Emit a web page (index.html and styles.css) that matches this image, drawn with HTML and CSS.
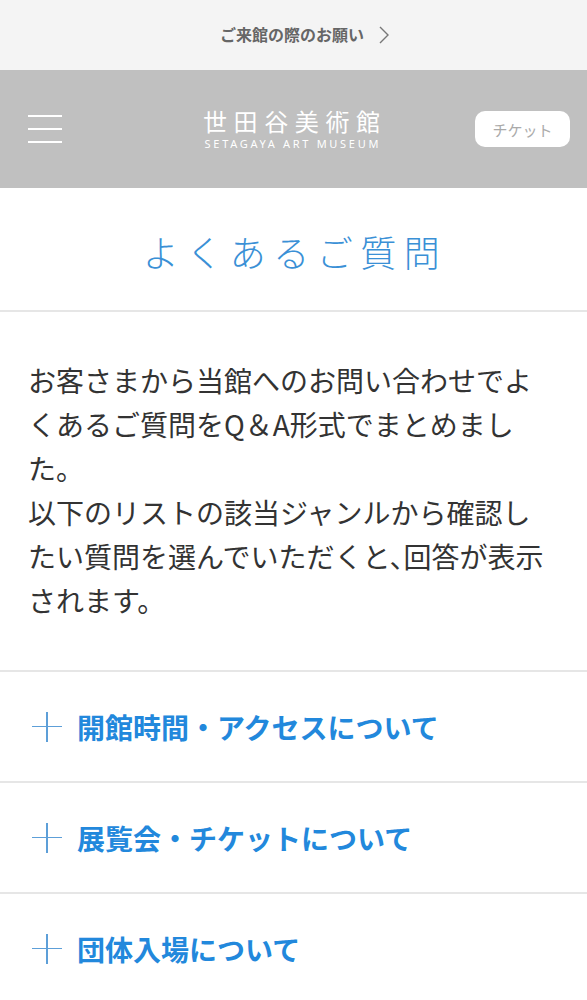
FILE: index.html
```html
<!DOCTYPE html>
<html lang="ja">
<head>
  <meta charset="UTF-8">
  <title>よくあるご質問 | 世田谷美術館</title>
  <link rel="stylesheet" href="styles.css">
</head>
<body>
  <div class="notice">
    <a href="#" class="notice-link">
      ご来館の際のお願い
      <svg class="chevron" width="10" height="18" viewBox="0 0 10 18"><path d="M1 1 L9 9 L1 17" fill="none" stroke="#777" stroke-width="1.4"/></svg>
    </a>
  </div>

  <header class="site-header">
    <button class="menu-btn" aria-label="メニュー">
      <span></span><span></span><span></span>
    </button>
    <a href="#" class="logo">
      <span class="logo-ja">世田谷美術館</span>
      <span class="logo-en">SETAGAYA ART MUSEUM</span>
    </a>
    <a href="#" class="ticket-btn">チケット</a>
  </header>

  <main>
    <h1 class="page-title">よくあるご質問</h1>

    <div class="intro">
      <p>お客さまから当館へのお問い合わせでよくあるご質問をQ＆A形式でまとめました。<br>以下のリストの該当ジャンルから確認したい質問を選んでいただくと、回答が表示されます。</p>
    </div>

    <ul class="faq-list">
      <li class="faq-item">
        <span class="plus"></span>
        <span class="faq-label">開館時間・アクセスについて</span>
      </li>
      <li class="faq-item">
        <span class="plus"></span>
        <span class="faq-label">展覧会・チケットについて</span>
      </li>
      <li class="faq-item">
        <span class="plus"></span>
        <span class="faq-label">団体入場について</span>
      </li>
    </ul>
  </main>
</body>
</html>
```

FILE: styles.css
```css
body {
  margin: 0;
  font-family: "Noto Sans CJK JP", "Noto Sans", sans-serif;
  color: #333;
  background: #fff;
}

a {
  text-decoration: none;
}

.notice {
  height: 70px;
  background: #f4f4f4;
  display: flex;
  align-items: center;
  justify-content: center;
}

.notice-link {
  display: flex;
  align-items: center;
  gap: 15px;
  color: #666;
  font-size: 16px;
  font-weight: bold;
  margin-left: 22px;
  margin-top: -2px;
}

.chevron {
  margin-top: 2px;
}

.site-header {
  height: 118px;
  background: #c0c0c0;
  display: grid;
  grid-template-columns: 1fr auto 1fr;
  align-items: center;
  padding: 0 17px 0 28px;
}

.menu-btn {
  justify-self: start;
  width: 34px;
  height: 28px;
  padding: 0;
  border: none;
  background: none;
  display: flex;
  flex-direction: column;
  justify-content: space-between;
}

.menu-btn span {
  display: block;
  height: 2px;
  background: #fff;
}

.logo {
  display: flex;
  flex-direction: column;
  align-items: center;
  color: #fff;
  margin-right: 15px;
}

.logo-ja {
  font-size: 24px;
  letter-spacing: 6.6px;
  margin-right: -6.6px;
  line-height: 30px;
}

.logo-en {
  font-family: "Noto Sans", sans-serif;
  font-size: 11px;
  letter-spacing: 2.7px;
  margin-right: -2.7px;
  line-height: 16px;
}

.ticket-btn {
  justify-self: end;
  width: 95px;
  height: 36px;
  background: #fff;
  border-radius: 10px;
  color: #aaa;
  font-size: 15px;
  display: flex;
  align-items: center;
  justify-content: center;
}

.page-title {
  margin: 0;
  height: 124px;
  display: flex;
  align-items: center;
  justify-content: center;
  font-size: 36px;
  font-weight: 300;
  letter-spacing: 7.5px;
  color: #3a90d6;
  border-bottom: 2px solid #e6e6e6;
  padding: 4px 0 0 3px;
  box-sizing: border-box;
}

.intro {
  padding: 46px 36px 48px 28px;
}

.intro p {
  margin: 0;
  font-size: 28px;
  line-height: 44px;
  font-feature-settings: "halt";
}

.faq-list {
  list-style: none;
  margin: 0;
  padding: 0;
}

.faq-item {
  height: 109px;
  border-top: 2px solid #e6e6e6;
  display: flex;
  align-items: center;
  gap: 15px;
  padding-left: 32px;
}

.plus {
  position: relative;
  width: 30px;
  height: 30px;
  flex-shrink: 0;
}

.plus::before,
.plus::after {
  content: "";
  position: absolute;
  background: #5d9fd8;
}

.plus::before {
  left: 0;
  right: 0;
  top: 14px;
  height: 1.5px;
}

.plus::after {
  top: 0;
  bottom: 0;
  left: 14px;
  width: 1.5px;
}

.faq-label {
  font-size: 28px;
  font-weight: bold;
  color: #2288dc;
  line-height: 1;
}
```
